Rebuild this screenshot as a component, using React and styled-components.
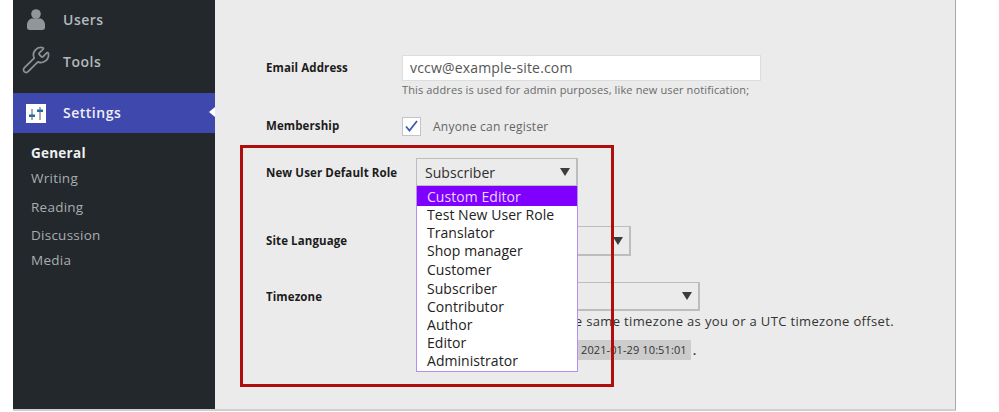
import React from "react";
import styled, { createGlobalStyle } from "styled-components";
import { Wrench } from "lucide-react";

const GlobalStyle = createGlobalStyle`
  html, body { margin: 0; padding: 0; background: #fff; }
  body { font-family: "Open Sans", "Noto Sans", sans-serif; }
`;

const Page = styled.div`
  width: 999px;
  height: 412px;
  overflow: hidden;
  background: #fff;
`;

const Frame = styled.div`
  display: flex;
  width: 943px;
  height: 411px;
  margin-left: 13px;
  box-sizing: border-box;
  border-right: 1px solid #a9a9a9;
  border-bottom: 2px solid #cfcfcf;
`;

const Sidebar = styled.nav`
  width: 202px;
  flex: none;
  background: #23282d;
  display: flex;
  flex-direction: column;
`;

const MenuItem = styled.div`
  display: flex;
  align-items: center;
  height: ${(p) => p.$h}px;
  box-sizing: border-box;
  padding: 0 0 1px 50px;
  position: relative;
  font-size: 14px;
  letter-spacing: 0.5px;
  font-weight: 600;
  color: #b4b9be;
`;

const MenuIcon = styled.span`
  position: absolute;
  left: ${(p) => p.$left}px;
  top: ${(p) => p.$top}px;
  display: flex;
`;

const ActiveItem = styled(MenuItem)`
  background: #3f48ac;
  color: #eef0f8;
  margin-top: 10px;
  &::after {
    content: "";
    position: absolute;
    right: 0;
    top: 14px;
    border: 6px solid transparent;
    border-right-color: #fff;
    border-left-width: 0;
    border-top-width: 5px;
    border-bottom-width: 5px;
  }
`;

const SubMenu = styled.div`
  display: flex;
  flex-direction: column;
  padding: 9px 0 0 18px;
`;

const SubItem = styled.div`
  height: ${(p) => p.$h}px;
  line-height: 22px;
  font-size: 13.5px;
  letter-spacing: 0.25px;
  font-weight: ${(p) => (p.$current ? 700 : 400)};
  color: ${(p) => (p.$current ? "#eef0f1" : "#a9adb0")};
`;

const Main = styled.main`
  flex: 1;
  background: #ebebeb;
  padding: 55px 0 0 51px;
  position: relative;
`;

const Row = styled.div`
  display: flex;
  align-items: ${(p) => p.$align || "flex-start"};
  margin-top: ${(p) => p.$mt || 0}px;
`;

const Label = styled.div`
  width: ${(p) => p.$w}px;
  flex: none;
  font-size: 11.5px;
  line-height: ${(p) => p.$lh || 26}px;
  font-weight: 700;
  letter-spacing: 0.1px;
  color: #1c1c1c;
`;

const Field = styled.div`
  display: flex;
  flex-direction: column;
`;

const TextInput = styled.div`
  width: 359px;
  height: 26px;
  box-sizing: border-box;
  background: #fff;
  border: 1px solid #ddd;
  padding-left: 7px;
  font-size: 14px;
  line-height: 24px;
  letter-spacing: 0.17px;
  color: #555;
`;

const Hint = styled.div`
  font-size: 11px;
  line-height: 16px;
  margin-top: 1px;
  letter-spacing: 0.13px;
  color: #6a6a6a;
`;

const Checkbox = styled.span`
  width: 19px;
  height: 19px;
  box-sizing: border-box;
  background: #fff;
  border: 1px solid #c4c4c4;
  display: flex;
  align-items: center;
  justify-content: center;
`;

const CheckLabel = styled.span`
  font-size: 12px;
  letter-spacing: 0.23px;
  margin-left: 12px;
  color: #666;
`;

const Select = styled.div`
  width: ${(p) => p.$w}px;
  height: ${(p) => p.$h}px;
  box-sizing: border-box;
  border: 1px solid #bdbdbd;
  border-width: 1px 2px 2px 1px;
  padding: 0 6px 0 8px;
  display: flex;
  align-items: center;
  justify-content: ${(p) => (p.$arrowOnly ? "flex-end" : "space-between")};
  font-size: 14px;
  letter-spacing: 0.05px;
  color: #2e2e2e;
`;

const Arrow = styled.span`
  width: 0;
  height: 0;
  border-left: 5.5px solid transparent;
  border-right: 5.5px solid transparent;
  border-top: 8px solid #3c3c3c;
`;

const ZoneNote = styled.div`
  font-size: 13px;
  line-height: 18px;
  margin-top: 1px;
  letter-spacing: 0.35px;
  color: #333;
  white-space: nowrap;
`;

const TimeLine = styled.div`
  display: flex;
  align-items: flex-end;
  margin-top: 10px;
  font-size: 13px;
  line-height: 20px;
  font-weight: 600;
  color: #333;
  white-space: nowrap;
`;

const TimeStamp = styled.code`
  font-family: "Open Sans", sans-serif;
  font-size: 11px;
  font-weight: 400;
  line-height: 20px;
  letter-spacing: 0.1px;
  background: #ccc;
  padding: 0 4px 0 3px;
  margin: 0 2px 0 162px;
`;

const Dropdown = styled.ul`
  position: absolute;
  left: 201px;
  top: 186px;
  width: 162px;
  height: 186px;
  box-sizing: border-box;
  margin: 0;
  padding: 0;
  list-style: none;
  background: #fff;
  border: 1px solid #b48ff0;
  border-top: 0;
  font-size: 14px;
  letter-spacing: 0.05px;
  color: #222;
`;

const Option = styled.li`
  height: ${(p) => p.$h}px;
  line-height: ${(p) => (p.$selected ? p.$h + 2 : p.$h)}px;
  padding-left: 10px;
  background: ${(p) => (p.$selected ? "#7f00ff" : "transparent")};
  color: ${(p) => (p.$selected ? "#e8d8ff" : "#222")};
`;

const Callout = styled.div`
  position: absolute;
  left: 25px;
  top: 145px;
  width: 374px;
  height: 242px;
  box-sizing: border-box;
  border: 3px solid #b00d0d;
  pointer-events: none;
`;

const sections = [
  { name: "General", h: 25, current: true },
  { name: "Writing", h: 29 },
  { name: "Reading", h: 28 },
  { name: "Discussion", h: 25 },
  { name: "Media", h: 24 },
];

const roles = [
  ["Custom Editor", 20],
  ["Test New User Role", 18],
  ["Translator", 18],
  ["Shop manager", 18],
  ["Customer", 20],
  ["Subscriber", 18],
  ["Contributor", 18],
  ["Author", 18],
  ["Editor", 18],
  ["Administrator", 18],
];

const UserIcon = () => (
  <svg width="18" height="21" viewBox="0 0 18 21" fill="#92969a">
    <circle cx="9" cy="5" r="4.8" />
    <path d="M0 16c0-4 3-6.500 5-6.500h8c2 0 5 2.500 5 6.500v2.500c0 1.500-1 2.500-2.500 2.500h-13C1 21 0 20 0 18.500z" />
  </svg>
);

const SettingsIcon = () => (
  <svg width="20" height="19" viewBox="0 0 20 19">
    <rect width="20" height="19" fill="#fff" />
    <path d="M6 5v11M14 3v13" stroke="#555" strokeWidth="1" />
    <rect x="3" y="10.500" width="6" height="2.500" fill="#1f6f9f" />
    <rect x="11" y="5.500" width="6" height="2.500" fill="#1f6f9f" />
  </svg>
);

const App = () => {
  return (
    <Page>
      <GlobalStyle />
      <Frame>
        <Sidebar>
          <MenuItem $h={40}>
            <MenuIcon $left={14} $top={9}>
              <UserIcon />
            </MenuIcon>
            Users
          </MenuItem>
          <MenuItem $h={43}>
            <MenuIcon $left={8} $top={5}>
              <Wrench size={30} color="#8e9295" strokeWidth={1.4} />
            </MenuIcon>
            Tools
          </MenuItem>
          <ActiveItem $h={40}>
            <MenuIcon $left={13} $top={11}>
              <SettingsIcon />
            </MenuIcon>
            Settings
          </ActiveItem>
          <SubMenu>
            {sections.map((s) => (
              <SubItem key={s.name} $h={s.h} $current={s.current}>
                {s.name}
              </SubItem>
            ))}
          </SubMenu>
        </Sidebar>
        <Main>
          <Row>
            <Label $w={136}>Email Address</Label>
            <Field>
              <TextInput>vccw@example-site.com</TextInput>
              <Hint>This addres is used for admin purposes, like new user notification;</Hint>
            </Field>
          </Row>
          <Row $mt={15} $align="center">
            <Label $w={136}>Membership</Label>
            <Checkbox>
              <svg width="15" height="14" viewBox="0 0 15 14">
                <path d="M2 7.500l3.500 4L13 2" fill="none" stroke="#3f5bb5" strokeWidth="1.800" />
              </svg>
            </Checkbox>
            <CheckLabel>Anyone can register</CheckLabel>
          </Row>
          <Row $mt={19} $align="center">
            <Label $w={150}>New User Default Role</Label>
            <Select $w={162} $h={29}>
              Subscriber
              <Arrow />
            </Select>
          </Row>
          <Row $mt={39} $align="center">
            <Label $w={150}>Site Language</Label>
            <Select $w={215} $h={30} $arrowOnly>
              <Arrow />
            </Select>
          </Row>
          <Row $mt={26}>
            <Label $w={150} $lh={29}>Timezone</Label>
            <Field>
              <Select $w={284} $h={29} $arrowOnly>
                <Arrow />
              </Select>
              <ZoneNote>Choose either a city in the same timezone as you or a UTC timezone offset.</ZoneNote>
              <TimeLine>
                <TimeStamp>2021-01-29 10:51:01</TimeStamp>.
              </TimeLine>
            </Field>
          </Row>
          <Dropdown>
            {roles.map(([name, h], i) => (
              <Option key={name} $h={h} $selected={i === 0}>
                {name}
              </Option>
            ))}
          </Dropdown>
          <Callout />
        </Main>
      </Frame>
    </Page>
  );
};

export default App;
